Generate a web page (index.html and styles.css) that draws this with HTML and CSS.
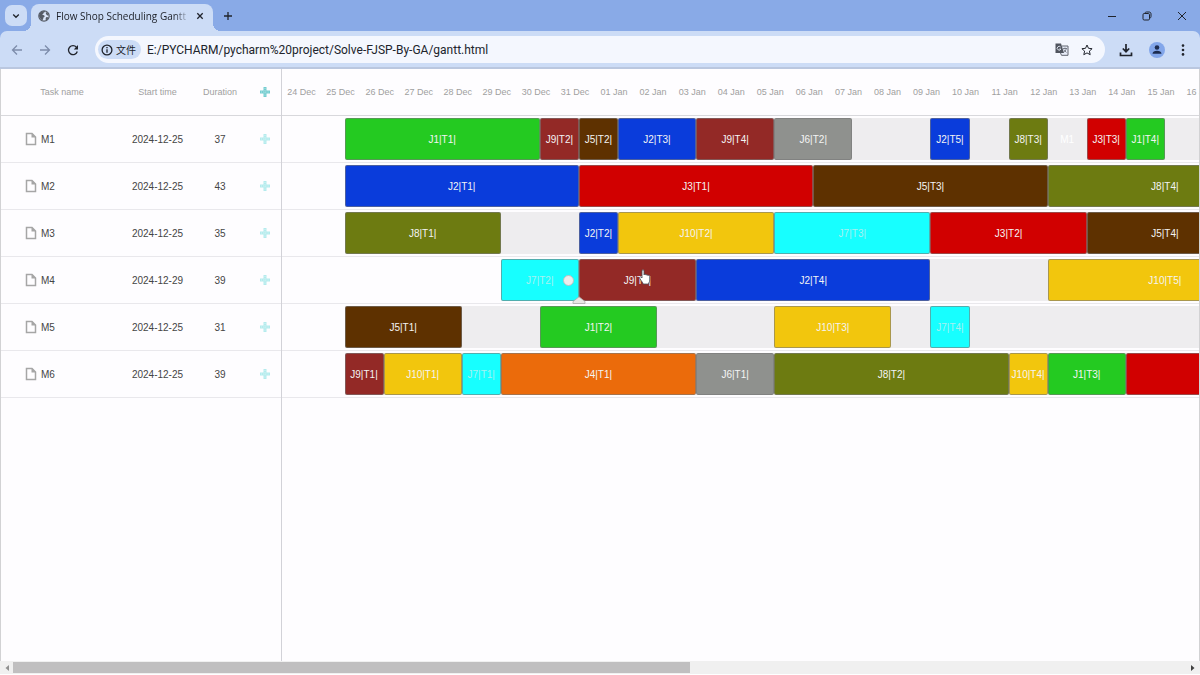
FILE: index.html
```html
<!DOCTYPE html>
<html lang="en">
<head>
<meta charset="utf-8">
<title>Flow Shop Scheduling Gantt</title>
<link rel="stylesheet" href="styles.css">
</head>
<body>
<svg class="defs" aria-hidden="true">
  <symbol id="file" viewBox="0 0 12 14"><path d="M1.500 1.500h5.500l3.500 3.500v7.500h-9z" fill="none" stroke="#a6a6a6" stroke-width="1.500"/><path d="M6.500 1v4.500h4.500z" fill="#a6a6a6"/></symbol>
  <symbol id="plus" viewBox="0 0 12 12"><path d="M4.500 1h3v3.500h3.500v3h-3.500v3.500h-3v-3.500h-3.500v-3h3.500z" fill="currentColor"/><path d="M6 2v8M2 6h8" stroke="#fff" stroke-width=".8" stroke-dasharray="1 1.200" opacity=".6"/></symbol>
</svg>
<header class="browser">
  <div class="tabstrip">
    <button class="tab-search" aria-label="Search tabs"><svg width="8" height="8" viewBox="0 0 8 8"><path d="M1.200 2.500 4 5.300l2.800-2.800" class="line-bold"/></svg></button>
    <div class="tab">
      <svg width="12" height="12" viewBox="0 0 12 12"><circle cx="6" cy="6" r="5.200" fill="#d9e4f8" stroke="#555b66" stroke-width="1.200"/><path d="M1 5.500C1.500 2.500 4 .8 6.800 1c.5 1-.5 1.500-1.300 1.800.3 1-.6 1.300-1.200 1.500 0 1 1.700.7 2.200 1.500.4 1-.5 1.500-1.200 2 .2 1.200-.5 2-1 2.600C2.800 9.200 1 7.800 1 5.500zM8 2c1.500.7 2.700 2 2.900 3.500-1 .3-2.300-.1-2.700-1.200C8 3.500 7.500 3 8 2zM8.300 7.200c.9-.3 1.700.1 2.200.5-.5 1.200-1.500 2.200-2.600 2.700-.3-1-.5-2.500.4-3.200z" fill="#555b66"/></svg>
      <span class="tab-title">Flow Shop Scheduling Gantt</span>
      <button class="icon-btn" aria-label="Close tab"><svg width="8" height="8" viewBox="0 0 8 8"><path d="m1.300 1.300 5.400 5.400m0-5.400L1.300 6.700" class="line-bold"/></svg></button>
    </div>
    <button class="icon-btn new-tab" aria-label="New tab"><svg width="10" height="10" viewBox="0 0 10 10"><path d="M5 1v8M1 5h8" class="line-bold"/></svg></button>
    <div class="window-btns">
      <button class="icon-btn" aria-label="Minimize"><svg width="10" height="10" viewBox="0 0 10 10"><path d="M1 5.500h8" class="line"/></svg></button>
      <button class="icon-btn" aria-label="Restore"><svg width="10" height="10" viewBox="0 0 10 10"><rect x="1" y="2.500" width="6.500" height="6.500" rx="1.200" class="line"/><path d="M3 2.500C3 1.500 3.500 1 4.500 1H7c1.300 0 2 .7 2 2v2.500c0 1-.5 1.500-1.500 1.500" class="line"/></svg></button>
      <button class="icon-btn" aria-label="Close"><svg width="10" height="10" viewBox="0 0 10 10"><path d="m1 1 8 8M9 1 1 9" class="line"/></svg></button>
    </div>
  </div>
  <nav class="toolbar">
    <button class="icon-btn muted" aria-label="Back"><svg width="12" height="12" viewBox="0 0 12 12"><path d="M11 6H1.800M6 1.500 1.500 6 6 10.500" class="line"/></svg></button>
    <button class="icon-btn muted" aria-label="Forward"><svg width="12" height="12" viewBox="0 0 12 12"><path d="M1 6h9.200M6 1.500 10.500 6 6 10.500" class="line"/></svg></button>
    <button class="icon-btn" aria-label="Reload"><svg width="12" height="12" viewBox="0 0 12 12"><path d="M10.300 7.500A4.500 4.500 0 1 1 9.500 3.300L10.500 4.500" class="line-bold"/><path d="M11 1v4.500H6.800z" fill="#20242c"/></svg></button>
    <div class="omnibox">
      <button class="chip"><svg width="12" height="12" viewBox="0 0 12 12"><circle cx="6" cy="6" r="4.900" class="line-bold"/><path d="M6 5.300v3.400M6 3v1.300" class="line-bold"/></svg><span>文件</span></button>
      <input class="url" type="text" aria-label="Address" value="E:/PYCHARM/pycharm%20project/Solve-FJSP-By-GA/gantt.html">
      <button class="icon-btn" aria-label="Translate"><svg width="14" height="13" viewBox="0 0 14 13"><path d="M7 3h6v9.300H6.500L5.500 10" fill="#e9eefa" stroke="#60656f"/><path d="M.5.500h5.500L9 10H.5z" fill="#50555f"/><path d="M5.600 4A1.900 1.900 0 1 0 5.900 6H4.300" fill="none" stroke="#e9eefa" stroke-width=".9"/><path d="M8 5.500h4M10 4.500v1M11.300 5.500c-.4 2-1.500 3-2.500 3.800M8.800 6.500l2.600 3" fill="none" stroke="#60656f" stroke-width=".8"/></svg></button>
      <button class="icon-btn" aria-label="Bookmark"><svg width="12" height="12" viewBox="0 0 12 12"><path d="m6 1 1.500 3.300 3.600.4-2.700 2.400.8 3.600L6 8.900l-3.200 1.800.8-3.600L.9 4.700l3.600-.4z" class="line"/></svg></button>
    </div>
    <button class="icon-btn" aria-label="Downloads"><svg width="14" height="14" viewBox="0 0 14 14"><path d="M7 1v7.500M3.800 5.500 7 8.700l3.200-3.200M1.500 9.500v3h11v-3" class="line-heavy"/></svg></button>
    <button class="icon-btn" aria-label="Profile"><svg width="16" height="16" viewBox="0 0 16 16"><circle cx="8" cy="8" r="8" fill="#82a6ea"/><circle cx="8" cy="5.500" r="2.300" fill="#1c2c50"/><path d="M3.500 11.800c0-2 2-3 4.500-3s4.500 1 4.500 3z" fill="#1c2c50"/></svg></button>
    <button class="icon-btn" aria-label="Menu"><svg width="4" height="12" viewBox="0 0 4 12"><g fill="#20242c"><circle cx="2" cy="1.600" r="1.300"/><circle cx="2" cy="6" r="1.300"/><circle cx="2" cy="10.400" r="1.300"/></g></svg></button>
  </nav>
</header>
<main class="gantt">
  <section class="grid">
    <table class="tasks">
      <thead><tr><th class="name">Task name</th><th class="start">Start time</th><th class="duration">Duration</th><th class="add"><button class="icon-btn" aria-label="Add task"><svg class="plus plus-strong"><use href="#plus"/></svg></button></th></tr></thead>
      <tbody>
        <tr><td><span class="task"><svg class="file"><use href="#file"/></svg>M1</span></td><td>2024-12-25</td><td>37</td><td><button class="icon-btn" aria-label="Add to M1"><svg class="plus"><use href="#plus"/></svg></button></td></tr>
        <tr><td><span class="task"><svg class="file"><use href="#file"/></svg>M2</span></td><td>2024-12-25</td><td>43</td><td><button class="icon-btn" aria-label="Add to M2"><svg class="plus"><use href="#plus"/></svg></button></td></tr>
        <tr><td><span class="task"><svg class="file"><use href="#file"/></svg>M3</span></td><td>2024-12-25</td><td>35</td><td><button class="icon-btn" aria-label="Add to M3"><svg class="plus"><use href="#plus"/></svg></button></td></tr>
        <tr><td><span class="task"><svg class="file"><use href="#file"/></svg>M4</span></td><td>2024-12-29</td><td>39</td><td><button class="icon-btn" aria-label="Add to M4"><svg class="plus"><use href="#plus"/></svg></button></td></tr>
        <tr><td><span class="task"><svg class="file"><use href="#file"/></svg>M5</span></td><td>2024-12-25</td><td>31</td><td><button class="icon-btn" aria-label="Add to M5"><svg class="plus"><use href="#plus"/></svg></button></td></tr>
        <tr><td><span class="task"><svg class="file"><use href="#file"/></svg>M6</span></td><td>2024-12-25</td><td>39</td><td><button class="icon-btn" aria-label="Add to M6"><svg class="plus"><use href="#plus"/></svg></button></td></tr>
      </tbody>
    </table>
  </section>
  <section class="timeline">
    <div class="scale">
      <span>24 Dec</span><span>25 Dec</span><span>26 Dec</span><span>27 Dec</span><span>28 Dec</span><span>29 Dec</span><span>30 Dec</span><span>31 Dec</span><span>01 Jan</span><span>02 Jan</span><span>03 Jan</span><span>04 Jan</span><span>05 Jan</span><span>06 Jan</span><span>07 Jan</span><span>08 Jan</span><span>09 Jan</span><span>10 Jan</span><span>11 Jan</span><span>12 Jan</span><span>13 Jan</span><span>14 Jan</span><span>15 Jan</span><span>16 Jan</span>
    </div>
    <div class="row">
      <div class="bar project" style="--start:0;--days:37">M1</div>
      <div class="bar j1" style="--start:0;--days:5">J1|T1|</div>
      <div class="bar j9" style="--start:5;--days:1">J9|T2|</div>
      <div class="bar j5" style="--start:6;--days:1">J5|T2|</div>
      <div class="bar j2" style="--start:7;--days:2">J2|T3|</div>
      <div class="bar j9" style="--start:9;--days:2">J9|T4|</div>
      <div class="bar j6" style="--start:11;--days:2">J6|T2|</div>
      <div class="bar j2" style="--start:15;--days:1">J2|T5|</div>
      <div class="bar j8" style="--start:17;--days:1">J8|T3|</div>
      <div class="bar j3" style="--start:19;--days:1">J3|T3|</div>
      <div class="bar j1" style="--start:20;--days:1">J1|T4|</div>
    </div>
    <div class="row">
      <div class="bar j2" style="--start:0;--days:6">J2|T1|</div>
      <div class="bar j3" style="--start:6;--days:6">J3|T1|</div>
      <div class="bar j5" style="--start:12;--days:6">J5|T3|</div>
      <div class="bar j8" style="--start:18;--days:6">J8|T4|</div>
    </div>
    <div class="row">
      <div class="bar project" style="--start:0;--days:35"></div>
      <div class="bar j8" style="--start:0;--days:4">J8|T1|</div>
      <div class="bar j2" style="--start:6;--days:1">J2|T2|</div>
      <div class="bar j10" style="--start:7;--days:4">J10|T2|</div>
      <div class="bar j7" style="--start:11;--days:4">J7|T3|</div>
      <div class="bar j3" style="--start:15;--days:4">J3|T2|</div>
      <div class="bar j5" style="--start:19;--days:4">J5|T4|</div>
    </div>
    <div class="row">
      <div class="bar project" style="--start:4;--days:34"></div>
      <div class="bar j7 hovered" style="--start:4;--days:2">J7|T2|<span class="link-dot"></span><svg class="progress-knob" width="14" height="8" viewBox="0 0 14 8"><path d="M1 7.500V5.500L7 .8l6 4.700v2z" fill="#e8e6e4" stroke="#a9a9a9" stroke-width=".8"/></svg></div>
      <div class="bar j9" style="--start:6;--days:3">J9|T1|<svg class="pointer" width="12" height="16" viewBox="0 0 12 16"><path d="M3 9V2c0-1.600 2-1.600 2 0v4c.3-1 1.800-.9 2 .2.400-.8 1.700-.6 1.900.4.500-.6 1.800-.4 1.800.7V11c0 2-1 2.500-1.300 4H4.200C4 13.500 2.500 12.500.9 9.500.2 8 1.500 7.300 2.300 8.200z" fill="#fff" stroke="#46505c" stroke-width=".8"/></svg></div>
      <div class="bar j2" style="--start:9;--days:6">J2|T4|</div>
      <div class="bar j10" style="--start:18;--days:6">J10|T5|</div>
    </div>
    <div class="row">
      <div class="bar project" style="--start:0;--days:31"></div>
      <div class="bar j5" style="--start:0;--days:3">J5|T1|</div>
      <div class="bar j1" style="--start:5;--days:3">J1|T2|</div>
      <div class="bar j10" style="--start:11;--days:3">J10|T3|</div>
      <div class="bar j7" style="--start:15;--days:1">J7|T4|</div>
    </div>
    <div class="row">
      <div class="bar j9" style="--start:0;--days:1">J9|T1|</div>
      <div class="bar j10" style="--start:1;--days:2">J10|T1|</div>
      <div class="bar j7" style="--start:3;--days:1">J7|T1|</div>
      <div class="bar j4" style="--start:4;--days:5">J4|T1|</div>
      <div class="bar j6" style="--start:9;--days:2">J6|T1|</div>
      <div class="bar j8" style="--start:11;--days:6">J8|T2|</div>
      <div class="bar j10" style="--start:17;--days:1">J10|T4|</div>
      <div class="bar j1" style="--start:18;--days:2">J1|T3|</div>
      <div class="bar j3" style="--start:20;--days:5"></div>
    </div>
  </section>
</main>
<footer class="scrollbar">
  <svg width="12" height="12" viewBox="0 0 12 12"><path d="M8 3v6L4.500 6z" fill="#909090"/></svg>
  <div class="track"><div class="thumb"></div></div>
  <svg width="12" height="12" viewBox="0 0 12 12"><path d="M4 3v6l3.500-3z" fill="#404040"/></svg>
</footer>
</body>
</html>
```
FILE: styles.css
```css
* { box-sizing: border-box; }
body {
  margin: 0;
  height: 100vh;
  display: flex;
  flex-direction: column;
  overflow: hidden;
  background: #fefdff;
  color: #454545;
  font: 10px "Liberation Sans", Arial, sans-serif;
}
button {
  border: 0;
  padding: 0;
  background: none;
  color: inherit;
  font: inherit;
}
svg { display: block; }
.defs { display: none; }
.icon-btn { display: grid; place-items: center; flex: none; }
.line, .line-bold, .line-heavy { fill: none; stroke: #20242c; }
.line { stroke-width: 1; }
.line-bold { stroke-width: 1.3; }
.line-heavy { stroke-width: 1.7; }
.muted .line { stroke: #7d8cab; stroke-width: 1.3; }

/* Browser frame */
.browser {
  background: #89aae7;
  font-family: "Open Sans", "Noto Sans", "Noto Sans CJK SC", sans-serif;
  color: #20242c;
}
.tabstrip { display: flex; height: 31px; }
.tab-search {
  width: 22px;
  height: 21px;
  margin: 5px 4px 0 5px;
  border-radius: 7px;
  background: #ccdcf6;
  display: grid;
  place-items: center;
}
.tab {
  position: relative;
  display: flex;
  align-items: center;
  gap: 6px;
  width: 182px;
  height: 27px;
  margin-top: 4px;
  padding: 0 9px 4px 7px;
  border-radius: 8px 8px 0 0;
  background: #ccdcf6;
}
.tab::before, .tab::after {
  content: "";
  position: absolute;
  bottom: 0;
  width: 8px;
  height: 8px;
}
.tab::before { right: 100%; background: radial-gradient(circle at 0 0, transparent 8px, #ccdcf6 8px); }
.tab::after { left: 100%; background: radial-gradient(circle at 100% 0, transparent 8px, #ccdcf6 8px); }
.tab-title {
  flex: 1;
  overflow: hidden;
  white-space: nowrap;
  font-size: 10px;
  mask-image: linear-gradient(90deg, #000 88%, transparent);
}
.new-tab { width: 30px; }
.window-btns { display: flex; gap: 25px; margin-left: auto; padding-right: 13px; }
.toolbar {
  display: flex;
  align-items: center;
  gap: 16px;
  height: 38px;
  padding: 1px 15px 0 11px;
  border-bottom: 2px solid #bac7df;
  border-radius: 7px 7px 0 0;
  background: #ccdcf6;
}
.omnibox {
  flex: 1;
  display: flex;
  align-items: center;
  gap: 12px;
  height: 27px;
  padding: 0 12px 0 3px;
  border-radius: 14px;
  background: #f4f7fe;
}
.toolbar .omnibox { margin-right: -2px; }
.chip {
  display: flex;
  align-items: center;
  gap: 3px;
  height: 19px;
  padding: 0 5px 0 3px;
  border-radius: 10px;
  background: #ccdcf6;
  font-size: 10px;
}
.url {
  flex: 1;
  min-width: 0;
  margin-left: -6px;
  padding: 0;
  border: 0;
  outline: 0;
  background: none;
  color: #20242c;
  font: 12px Roboto, "Noto Sans", sans-serif;
}

/* Chart */
.gantt {
  flex: 1;
  min-height: 0;
  display: flex;
  border: solid #d2d2d4;
  border-width: 0 1px;
}
.grid { flex: none; width: 281px; border-right: 1px solid #d2d2d8; }
.tasks { width: 100%; table-layout: fixed; border-spacing: 0; }
.tasks th, .tasks td {
  height: 47px;
  padding: 0;
  border-bottom: 1px solid #e9e8ec;
  text-align: center;
}
.tasks th { border-color: #d8d8dc; color: #a0a0a0; font-size: 9px; font-weight: 400; }
.name { width: 122px; }
.start { width: 69px; }
.duration { width: 56px; }
.tasks .icon-btn { width: 100%; }
.task { display: flex; align-items: center; gap: 4px; padding-left: 24px; }
.file { width: 12px; height: 14px; }
.plus { width: 12px; height: 12px; color: #b4ebed; }
.plus-strong { color: #74cdd0; }
.timeline { flex: 1; min-width: 0; overflow: hidden; }
.scale, .row { width: 170.4%; height: 47px; border-bottom: 1px solid #e9e8ec; }
.scale {
  display: flex;
  align-items: center;
  border-color: #d8d8dc;
  color: #a0a0a0;
  font-size: 9px;
}
.scale span { flex: 0 0 2.5%; text-align: center; white-space: nowrap; }
.row {
  display: grid;
  grid-template-columns: repeat(200, 1fr);
  padding: 2px 0;
}
.bar {
  position: relative;
  grid-row: 1;
  grid-column: calc(var(--start) * 5 + 9) / span calc(var(--days) * 5);
  display: grid;
  place-items: center;
  min-width: 0;
  border: 1px solid rgb(120 120 120 / 60%);
  border-radius: 2px;
  color: #f4f4f4;
  white-space: nowrap;
}
.project { border-color: #eeedef; background: #eeedef; color: #fff; }
.j1 { background: #24ca21; }
.j2 { background: #0a3cdb; }
.j3 { background: #d10000; }
.j4 { background: #eb6b0b; }
.j5 { background: #5e3100; }
.j6 { background: #8f918e; }
.j7 { background: #17ffff; color: #a5f1f1; }
.j8 { background: #6d7b11; }
.j9 { background: #932926; }
.j10 { background: #f2c60d; }
.hovered { z-index: 1; }
.link-dot {
  position: absolute;
  right: 4px;
  top: 15px;
  width: 11px;
  height: 11px;
  border: 1px solid #b5c3c3;
  border-radius: 50%;
  background: #ececec;
}
.progress-knob { position: absolute; right: -8px; bottom: -4px; }
.pointer { position: absolute; left: 59px; top: 9px; }

/* Horizontal scrollbar */
.scrollbar {
  display: flex;
  align-items: center;
  height: 14px;
  padding: 0 1px;
  border-bottom: 1px solid #fff;
  background: #f0f0f0;
}
.track { flex: 1; height: 11px; }
.thumb { width: 57.7%; height: 100%; background: #c0bfc0; }
```
